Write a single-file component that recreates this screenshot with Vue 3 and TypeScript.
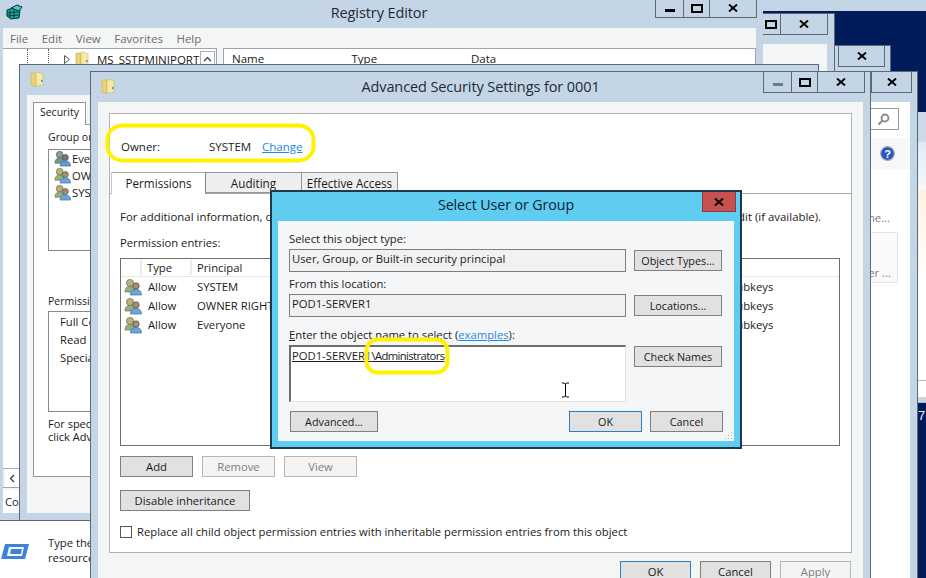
<script setup lang="ts">
const rows = [
  { type: 'Allow', principal: 'SYSTEM' },
  { type: 'Allow', principal: 'OWNER RIGHTS' },
  { type: 'Allow', principal: 'Everyone' },
]
const groups = ['Everyone', 'OWNER RIGHTS', 'SYSTEM']
</script>

<template>
  <div class="desktop">
    <svg class="defs" width="0" height="0" aria-hidden="true">
      <symbol id="folder" viewBox="0 0 14 16">
        <path d="M1 2h4l1 1v12H3l-2-1z" fill="#e8d27a" stroke="#c9b04e" stroke-width=".6" />
        <path d="M6 1l7 1.500V14l-7 1.500z" fill="#f6e8a6" stroke="#cdb75f" stroke-width=".6" />
        <path d="M11 9h1.500v2H11z" fill="#4a90c8" />
      </symbol>
      <symbol id="people" viewBox="0 0 18 18">
        <circle cx="6" cy="5" r="3.600" fill="#b9b07a" stroke="#6f6a4a" stroke-width=".7" />
        <path d="M1 14c0-4 2-5.500 5-5.500s5 1.500 5 5.500z" fill="#8fb37a" stroke="#5f7a55" stroke-width=".7" />
        <circle cx="12" cy="8" r="3.200" fill="#a58f6e" stroke="#4b4b4b" stroke-width=".7" />
        <path d="M6.500 17c0-4 2.500-5.500 5.500-5.500s5.500 1.500 5.500 5.500z" fill="#6fa5d8" stroke="#3f6f9f" stroke-width=".7" />
      </symbol>
      <symbol id="people-gray" viewBox="0 0 18 18">
        <circle cx="6" cy="5" r="3.600" fill="#8d9a96" stroke="#56625e" stroke-width=".7" />
        <path d="M1 14c0-4 2-5.500 5-5.500s5 1.500 5 5.500z" fill="#6f9a8a" stroke="#4f6a60" stroke-width=".7" />
        <circle cx="12" cy="8" r="3.200" fill="#77787a" stroke="#404040" stroke-width=".7" />
        <path d="M6.500 17c0-4 2.500-5.500 5.500-5.500s5.500 1.500 5.500 5.500z" fill="#5f9ad0" stroke="#3f6f9f" stroke-width=".7" />
      </symbol>
      <symbol id="x" viewBox="0 0 10 8">
        <path d="M1 .5l8 7M9 .5l-8 7" fill="none" stroke="#000" stroke-width="1.900" />
      </symbol>
    </svg>

    <div class="top-band"></div>
    <div class="far-window">
      <div class="far-a"></div>
      <div class="far-b"></div>
      <div class="far-c"></div>
      <div class="far-d"></div>
      <div class="far-e"></div>
    </div>
    <span class="far-num">7</span>

    <!-- Stacked windows peeking out at the top right -->
    <section class="win w2">
      <div class="bar">
        <div class="ctrls"><button class="cb close"><svg width="10" height="8"><use href="#x" /></svg></button></div>
      </div>
    </section>
    <section class="win w1">
      <div class="bar">
        <div class="ctrls">
          <button class="cb max"><i class="max-glyph"></i></button>
          <button class="cb close"><svg width="10" height="8"><use href="#x" /></svg></button>
        </div>
      </div>
      <div class="w1-body"></div>
    </section>

    <!-- Run window -->
    <section class="win run">
      <div class="bar">
        <div class="ctrls"><button class="cb close"><svg width="10" height="8"><use href="#x" /></svg></button></div>
      </div>
      <div class="run-body">
        <div class="run-search">
          <div class="search">
            <svg width="13" height="13" viewBox="0 0 13 13"><circle cx="8" cy="5" r="3.500" fill="none" stroke="#8a8a8a" stroke-width="1.800" /><path d="M5.500 7.500L1.500 11.500" stroke="#8a8a8a" stroke-width="2.200" /></svg>
          </div>
        </div>
        <div class="run-help">
          <svg width="15" height="15" viewBox="0 0 15 15"><circle cx="7.500" cy="7.500" r="6.800" fill="#2a56c0" stroke="#9fa8b8" stroke-width="1.200" /><text x="7.500" y="11.500" text-anchor="middle" font-size="11" font-weight="700" font-family="Liberation Sans, sans-serif" fill="#fff">?</text></svg>
        </div>
        <div class="run-more">Tell me...</div>
        <div class="run-box"><span>Other ...</span></div>
        <div class="run-line">
          <svg class="run-icon" width="30" height="20" viewBox="0 0 30 20"><path d="M5 2h24l-4 15H1z" fill="#3b82dc" /><path d="M9 5h15l-2 9H7z" fill="#fff" /><path d="M11 7h11l-1 5H10z" fill="#3b82dc" /></svg>
          <p>Type the name of a program, folder, document, or Internet<br />resource, and Windows will open it for you.</p>
        </div>
      </div>
    </section>

    <!-- Registry Editor -->
    <section class="win reg">
      <div class="bar reg-bar">
        <svg class="reg-icon" width="17" height="17" viewBox="0 0 17 17">
          <path d="M1 7l8-3 5 3-1 8-8 1-4-3z" fill="#17a8a0" stroke="#04353a" stroke-width="1" />
          <path d="M5 5l6-3 5 2-3 4z" fill="#45c9c0" stroke="#04353a" stroke-width="1" />
          <path d="M4 7v8M8 6v9M1 10l12-1M1 13l12-1" stroke="#04353a" stroke-width=".9" />
        </svg>
        <div class="title reg-title">Registry Editor</div>
        <div class="ctrls">
          <button class="cb min"><i class="min-glyph"></i></button>
          <button class="cb max"><i class="max-glyph"></i></button>
          <button class="cb close"><svg width="10" height="8"><use href="#x" /></svg></button>
        </div>
      </div>
      <div class="reg-body">
        <nav class="menu">
          <span>File</span><span>Edit</span><span>View</span><span>Favorites</span><span>Help</span>
        </nav>
        <div class="reg-panes">
          <div class="tree">
            <div class="tree-row">
              <i class="guide"></i><i class="guide"></i>
              <svg class="tri" width="6" height="9" viewBox="0 0 6 9"><path d="M.5.5l5 4-5 4z" fill="#fff" stroke="#555" /></svg>
              <svg width="14" height="16"><use href="#folder" /></svg>
              <span class="tree-name">MS_SSTPMINIPORT</span>
              <span class="up">
                <svg width="9" height="6" viewBox="0 0 9 6"><path d="M1 5l3.500-3.500L8 5" fill="none" stroke="#333" stroke-width="1.200" /></svg>
              </span>
            </div>
            <div class="tree-fill"></div>
            <div class="hscroll">
              <span class="left"><svg width="6" height="9" viewBox="0 0 6 9"><path d="M5 1L1.500 4.500 5 8" fill="none" stroke="#333" stroke-width="1.200" /></svg></span>
            </div>
          </div>
          <div class="values">
            <div class="values-head"><span>Name</span><span>Type</span><span>Data</span></div>
          </div>
        </div>
        <div class="status">Computer\HKEY_LOCAL_MACHINE\SYSTEM</div>
      </div>
    </section>

    <!-- Security properties -->
    <section class="win sec">
      <div class="bar">
        <svg class="win-folder" width="14" height="16"><use href="#folder" /></svg>
      </div>
      <div class="sec-body">
        <div class="sec-tab">Security</div>
        <div class="sec-panel">
          <div class="sec-label">Group or user names:</div>
          <ul class="sec-list">
            <li v-for="(g, i) in groups" :key="g">
              <svg width="17" height="17"><use :href="i === 0 ? '#people-gray' : '#people'" /></svg>{{ g }}
            </li>
          </ul>
          <div class="sec-label perm">Permissions for Everyone</div>
          <ul class="sec-list2">
            <li>Full Control</li><li>Read</li><li>Special permissions</li>
          </ul>
          <p class="sec-note">For special permissions or advanced settings,<br />click Advanced.</p>
        </div>
      </div>
    </section>

    <!-- Advanced Security Settings -->
    <section class="win main">
      <div class="bar">
        <svg class="win-folder" width="14" height="16"><use href="#folder" /></svg>
        <div class="title">Advanced Security Settings for 0001</div>
        <div class="ctrls">
          <button class="cb min"><i class="min-glyph faded"></i></button>
          <button class="cb max"><i class="max-glyph"></i></button>
          <button class="cb close"><svg width="10" height="8"><use href="#x" /></svg></button>
        </div>
      </div>
      <div class="main-body">
        <div class="panel">
          <div class="owner">
            <span class="owner-label">Owner:</span>
            <span class="owner-name">SYSTEM</span>
            <a class="link">Change</a>
          </div>
          <div class="tabs">
            <div class="tab active">Permissions</div>
            <div class="tab">Auditing</div>
            <div class="tab">Effective Access</div>
          </div>
          <div class="tab-page">
            <p class="info">For additional information, double-click a permission entry. To modify a permission entry, select the entry and click Edit (if available).</p>
            <div class="entries">Permission entries:</div>
            <div class="table">
              <div class="thead">
                <span class="c-icon"></span>
                <span class="c-type">Type</span>
                <span class="c-pr">Principal</span>
              </div>
              <div v-for="r in rows" :key="r.principal" class="trow">
                <span class="c-icon"><svg width="18" height="18"><use href="#people" /></svg></span>
                <span class="c-type">{{ r.type }}</span>
                <span class="c-pr">{{ r.principal }}</span>
                <span class="c-app">This key and subkeys</span>
              </div>
            </div>
            <div class="actions">
              <button class="btn w72">Add</button>
              <button class="btn w72 off">Remove</button>
              <button class="btn w72 off">View</button>
            </div>
            <button class="btn inherit">Disable inheritance</button>
            <label class="replace"><i class="check"></i>Replace all child object permission entries with inheritable permission entries from this object</label>
          </div>
        </div>
        <div class="main-foot">
          <button class="btn foot def">OK</button>
          <button class="btn foot">Cancel</button>
          <button class="btn foot off">Apply</button>
        </div>
      </div>
    </section>

    <!-- Select User or Group -->
    <section class="dialog">
      <div class="bar dlg-bar">
        <div class="title">Select User or Group</div>
        <div class="ctrls"><button class="dlg-close"><svg width="10" height="8"><use href="#x" /></svg></button></div>
      </div>
      <div class="dlg-body">
        <div class="dlg-label">Select this object type:</div>
        <div class="dlg-row">
          <div class="field">User, Group, or Built-in security principal</div>
          <button class="btn side">Object Types...</button>
        </div>
        <div class="dlg-label l2">From this location:</div>
        <div class="dlg-row">
          <div class="field">POD1-SERVER1</div>
          <button class="btn side">Locations...</button>
        </div>
        <div class="dlg-label l3"><u>E</u>nter the object name to select (<a class="link">examples</a>):</div>
        <div class="dlg-row top">
          <div class="area"><u>POD1-SERVER1<span class="tight">\Administrators</span></u></div>
          <button class="btn side check-btn">Check Names</button>
        </div>
        <div class="dlg-foot">
          <button class="btn adv">Advanced...</button>
          <span class="grow"></span>
          <button class="btn w73 def">OK</button>
          <button class="btn w73">Cancel</button>
        </div>
        <svg class="grip" width="9" height="9" viewBox="0 0 9 9"><path d="M7 1h1v1H7zM4 4h1v1H4zM7 4h1v1H7zM1 7h1v1H1zM4 7h1v1H4zM7 7h1v1H7z" fill="#a9b2b8" /></svg>
      </div>
    </section>

    <!-- Hand-drawn yellow highlights and the mouse cursor -->
    <svg class="marks" width="926" height="578" viewBox="0 0 926 578">
      <rect x="107.500" y="125.500" width="206" height="35" rx="15" ry="14" fill="none" stroke="#fff200" stroke-width="4" />
      <rect x="366.500" y="339.500" width="81" height="33" rx="11" ry="11" fill="none" stroke="#fff200" stroke-width="4" />
      <path d="M562 383h2.500l1 1 1-1h2.500M565.500 384v12M562 397h2.500l1-1 1 1h2.500" fill="none" stroke="#000" stroke-width="1" />
    </svg>
  </div>
</template>

<style>
html, body { margin: 0; background: #001c5a; }
</style>

<style scoped>
.desktop {
  position: relative;
  width: 926px;
  height: 578px;
  overflow: hidden;
  background: #001c5a;
  font-family: "Open Sans", "Noto Sans", sans-serif;
  font-size: 11.25px;
  color: #1a1a1a;
}
.defs { position: absolute; }
.top-band { position: absolute; left: 700px; top: 0; width: 226px; height: 11px; background: #c4d6e5; }

.far-window { position: absolute; left: 917px; top: 112px; width: 9px; display: flex; flex-direction: column; }
.far-a { height: 30px; background: #cdd9e6; }
.far-b { height: 48px; background: linear-gradient(#dfeaf7, #f6f9fd); }
.far-c { height: 190px; background: linear-gradient(#fff1e2, #ffffff 45%); }
.far-d { height: 16px; background: #fff; border-top: 1px solid #b9b9b9; }
.far-e { height: 5px; background: #d3d3d3; border-bottom: 1px solid #9fc0e8; }
.far-num { position: absolute; left: 918px; top: 408px; color: #e8eef8; font: 13px "Liberation Sans", sans-serif; }

.win {
  position: absolute;
  box-sizing: border-box;
  background: #c4d6e5;
  border: 1px solid #5b6976;
  display: flex;
  flex-direction: column;
}
.bar { display: grid; height: 30px; flex: none; }
.bar > * { grid-area: 1 / 1; }
.title { text-align: center; font-size: 14.5px; color: #1d2b36; padding-top: 3px; line-height: 24px; letter-spacing: -.1px; }
.win-folder { margin: 6px 0 0 10px; }
.ctrls { display: flex; justify-self: end; align-self: start; height: 21px; margin-right: 5px; }
.cb {
  padding: 0; margin: 0; height: 21px; box-sizing: border-box;
  background: #c4d6e5; border: 1px solid #5b6976; border-top: 0; border-left-width: 1px;
  display: flex; align-items: center; justify-content: center;
}
.cb + .cb { border-left: 0; }
.close { width: 47px; }
.min { width: 29px; }
.max { width: 26px; }
.min-glyph { width: 10px; height: 3px; background: #000; margin-top: 4px; }
.min-glyph.faded { background: #6a7d8c; }
.max-glyph { width: 8px; height: 5px; border: 2px solid #000; }

.run { left: -10px; top: 71px; width: 928px; height: 530px; }
.run .close { width: 41px; }
.run-body { flex: 1; margin-right: 7px; background: #fff; display: flex; flex-direction: column; align-items: flex-end; }
.run-search { width: 100%; display: flex; justify-content: flex-end; padding: 6px 11px 0 0; box-sizing: border-box; }
.search { width: 120px; height: 22px; box-sizing: border-box; border: 1px solid #9a9a9a; display: flex; align-items: center; justify-content: flex-end; padding-right: 8px; background: #fff; }
.run-help { width: 100%; height: 31px; margin-top: 8px; background: #f7f7f7; display: flex; align-items: center; justify-content: flex-end; padding-right: 15px; box-sizing: border-box; }
.run-more { color: #7a7a7a; margin: 41px 20px 0 0; line-height: 16px; }
.run-box { width: 200px; height: 51px; margin: 6px 12px 0 0; box-sizing: border-box; background: #fafafa; border: 1px solid #e4e4e4; display: flex; align-items: flex-end; justify-content: flex-end; padding: 0 6px 2px 0; color: #7a7a7a; }
.run-line { align-self: flex-start; display: flex; margin-top: 253px; }
.run-icon { margin: 6px 18px 0 9px; flex: none; }
.run-line p { margin: 0; line-height: 14.500px; white-space: nowrap; }

.w2 { left: 700px; top: 45px; width: 191px; height: 200px; }
.w1 { left: 600px; top: 13px; width: 235px; height: 200px; }
.w1 .ctrls { margin-right: 6px; }
.w1 .max { width: 20px; }
.w1-body { height: 60px; margin: 0 7px 0 0; background: #f4f5f5; }

.reg { left: -6px; top: -1px; width: 769px; height: 522px; border-top: 0; border-right: 0; }
.reg-bar { height: 29px; }
.reg-icon { margin: 4px 0 0 11px; }
.reg-title { padding-top: 2px; }
.reg .ctrls { height: 19px; margin-right: 6px; }
.reg .cb { height: 19px; }
.reg-body { flex: 1; display: flex; flex-direction: column; margin: 0 7px 7px 8px; background: #f4f5f5; }
.menu { height: 20px; display: flex; align-items: center; color: #6e6e6e; font-size: 11.500px; padding-left: 7px; gap: 13.5px; flex: none; }
.reg-panes { flex: 1; display: flex; gap: 6px; min-height: 0; }
.tree { width: 214px; box-sizing: border-box; border: 1px solid #9aa6b0; border-left: 0; background: #fff; display: flex; flex-direction: column; }
.tree-row { height: 20px; display: flex; align-items: center; }
.guide { width: 0; height: 20px; border-left: 1px dotted #555; margin-left: 20px; }
.guide:first-child { margin-left: 24px; }
.tri { margin-left: 15px; margin-right: 5px; }
.tree-name { margin-left: 8px; overflow: hidden; font-size: 11.500px; flex: 1; white-space: nowrap; }
.up { width: 13px; height: 14px; border: 1px solid #b0b0b0; display: flex; align-items: center; justify-content: center; margin-right: 1px; }
.tree-fill { flex: 1; }
.hscroll { height: 18px; border-top: 1px solid #b0b0b0; padding-left: 2px; background: #f0f0f0; display: flex; }
.left { width: 14px; background: #fff; display: flex; align-items: center; justify-content: center; }
.values { flex: 1; border: 1px solid #9aa6b0; background: #fff; }
.values-head { display: flex; padding: 2px 0 0 8px; height: 18px; font-size: 11.500px; }
.values-head span { width: 119.500px; }
.status { height: 23px; line-height: 24px; background: #fff; padding-left: 2px; margin-top: 2px; flex: none; white-space: nowrap; overflow: hidden; }

.sec { left: 19px; top: 64px; width: 800px; height: 457px; }
.sec-body { flex: 1; margin: 0 7px 7px 7px; background: #f4f5f5; padding: 7px 6px 0; min-height: 0; display: flex; flex-direction: column; }
.sec-tab { align-self: flex-start; width: 53px; height: 23px; box-sizing: border-box; text-align: center; line-height: 19px; background: #fff; border: 1px solid #8f98a3; border-bottom: 0; margin-bottom: -1px; position: relative; z-index: 1; font-size: 10.500px; }
.sec-panel { height: 353px; box-sizing: border-box; border: 1px solid #8f98a3; background: #fff; padding: 4px 14px 0; }
.sec-label { font-size: 10.500px; line-height: 16px; }
.sec-label.perm { margin-top: 42px; }
.sec-list { list-style: none; margin: 4px 0 0; padding: 0 0 0 5px; height: 102px; box-sizing: border-box; border: 1px solid #7f8c99; width: 500px; }
.sec-list li { height: 17px; line-height: 15px; display: flex; align-items: center; gap: 1px; }
.sec-list2 { list-style: none; margin: 2px 0 0; padding: 1px 0 0 11px; height: 101px; box-sizing: border-box; border: 1px solid #7f8c99; width: 500px; }
.sec-list2 li { line-height: 18px; }
.sec-note { margin: 5px 0 0; line-height: 13px; font-size: 11px; }

.main { left: 90px; top: 71px; width: 781px; height: 530px; }
.main-body { flex: 1; margin: 0 7px 0 7px; background: #f4f5f5; padding: 11px 11px 0; display: flex; flex-direction: column; }
.panel { height: 440px; flex: none; box-sizing: border-box; border: 1px solid #b2b2b2; background: #fff; display: flex; flex-direction: column; }
.owner { display: flex; align-items: center; height: 58px; padding: 6px 0 0 11px; box-sizing: border-box; font-size: 11.500px; }
.owner-label { width: 88px; }
.owner-name { width: 53px; }
.link { color: #1e88e5; text-decoration: underline; }
.tabs { display: flex; height: 21px; padding-left: 1px; border-bottom: 1px solid #a8a8a8; box-sizing: content-box; }
.tab { width: 96px; box-sizing: border-box; height: 21px; text-align: center; line-height: 20px; background: #eeeeee; border: 1px solid #8f98a3; border-left: 0; font-size: 11.7px; white-space: nowrap; }
.tab.active { width: 95px; background: #fff; height: 22px; border-left: 1px solid #c8c8c8; border-bottom: 0; border-top-color: #a5adb5; border-right-color: #7d8690; }
.tab:last-child { width: 96px; }
.tab-page { flex: 1; padding: 0 0 0 10px; display: flex; flex-direction: column; align-items: flex-start; }
.info { margin: 15px 0 0; line-height: 16px; white-space: nowrap; font-size: 11.42px; }
.entries { margin-top: 10px; line-height: 16px; }
.table { margin-top: 7px; width: 720px; height: 188px; box-sizing: border-box; border: 1px solid #6f6f6f; flex: none; }
.thead, .trow { display: flex; align-items: center; height: 19px; position: relative; }
.thead { border-bottom: 1px solid #e6e6e6; height: 18px; box-sizing: border-box; }
.c-icon { width: 21px; height: 18px; flex: none; padding-left: 3px; box-sizing: border-box; }
.thead .c-icon { border-right: 2px solid #ececec; }
.c-type { width: 50px; padding-left: 5px; box-sizing: border-box; flex: none; }
.thead .c-type { border-right: 2px solid #ececec; }
.c-pr { padding-left: 5px; width: 460px; flex: none; white-space: nowrap; }
.c-app { white-space: nowrap; margin-left: 6px; }
.trow .c-type { padding-left: 6px; }
.btn {
  font: inherit; color: #1a1a1a; background: #e1e1e1; border: 1px solid #7f7f7f; padding: 0; box-sizing: border-box; height: 21px; flex: none;
}
.btn.off { background: #f4f4f4; border-color: #b5b5b5; color: #7d7d7d; }
.btn.def { border-color: #2f7fbf; }
.w72 { width: 73px; }
.actions { display: flex; gap: 9px; margin-top: 10px; }
.inherit { width: 130px; margin-top: 13px; }
.replace { display: flex; align-items: center; margin-top: 13px; line-height: 16px; white-space: nowrap; }
.check { width: 12px; height: 12px; box-sizing: border-box; border: 1px solid #555; background: #fff; margin-right: 5px; }
.main-foot { display: flex; justify-content: flex-end; gap: 9px; margin-top: 8px; padding-right: 1px; }
.foot { width: 71px; }

.dialog {
  position: absolute; left: 270px; top: 190px; width: 472px; height: 259px; box-sizing: border-box;
  background: #5fcdf1; border: 2px solid #1d3a4c; display: flex; flex-direction: column;
}
.dlg-bar { height: 29px; }
.dlg-bar .title { color: #10222e; padding-top: 1px; font-size: 14.25px; }
.dlg-bar .ctrls { margin-right: 4px; height: 20px; }
.dlg-close { width: 34px; height: 20px; padding: 0; box-sizing: border-box; background: #c75050; border: 1px solid #8a3b3b; border-top: 0; display: flex; align-items: center; justify-content: center; }
.dlg-body { position: relative; flex: 1; margin: 0 6px 6px 6px; background: #f5f6f7; padding: 10px 11px 0; display: flex; flex-direction: column; }
.dlg-body .btn { font-size: 10.8px; }
.dlg-label { line-height: 16px; height: 18px; white-space: nowrap; }
.dlg-label.l2 { margin-top: 4px; height: 18px; }
.dlg-label.l3 { margin-top: 10px; height: 18px; }
.dlg-row { display: flex; gap: 8px; align-items: center; }
.dlg-row.top { align-items: flex-start; }
.field { width: 337px; height: 23px; box-sizing: border-box; border: 1px solid #7f7f7f; background: #f1f1f1; line-height: 18px; padding-left: 2px; white-space: nowrap; }
.area { width: 337px; height: 57px; box-sizing: border-box; background: #fff; border: 1px solid #e4e4e4; border-top: 2px solid #6e6e6e; border-left: 2px solid #6e6e6e; line-height: 15px; padding: 1px 0 0 1px; white-space: nowrap; }
.tight { letter-spacing: -.6px; }
.side { width: 88px; }
.check-btn { margin-top: 1px; }
.dlg-foot { display: flex; gap: 8px; align-items: flex-start; margin-top: 9px; padding-left: 1px; }
.grow { flex: 1; }
.adv { width: 88px; }
.w73 { width: 73px; }
.grip { position: absolute; right: 1px; bottom: 1px; }

.marks { position: absolute; left: 0; top: 0; pointer-events: none; }
</style>
